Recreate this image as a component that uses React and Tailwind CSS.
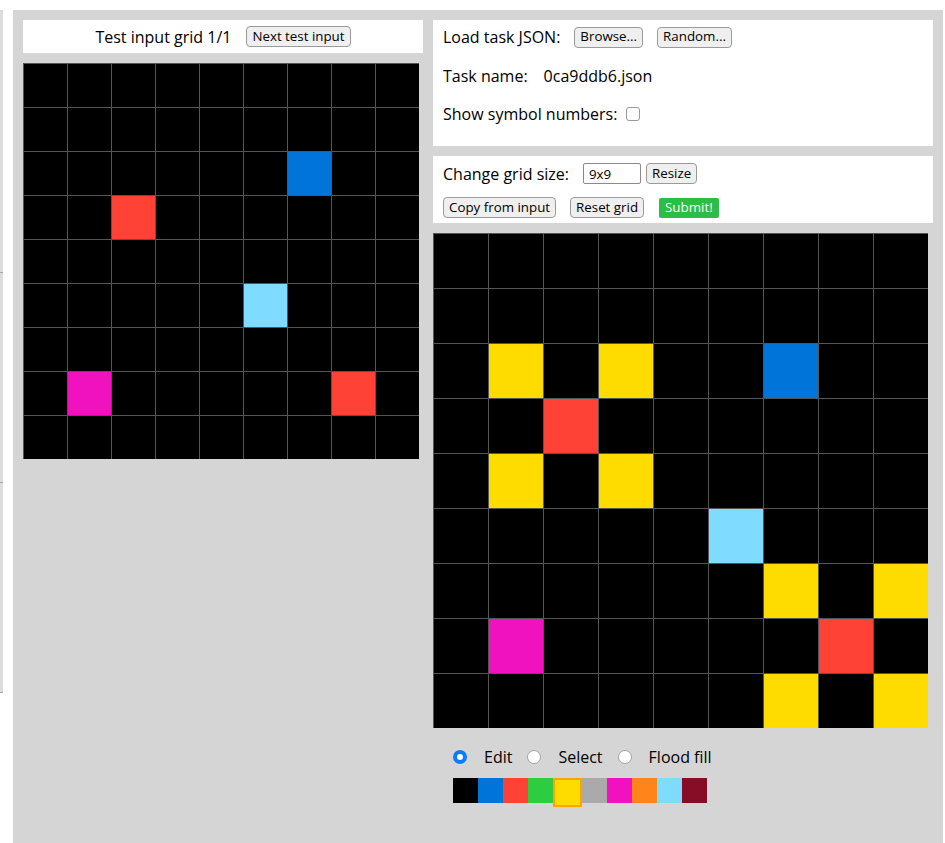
import { useState } from 'react'

// ARC palette, 0..9
const swatchClass = [
  'bg-black',
  'bg-[#0074d9]',
  'bg-[#ff4136]',
  'bg-[#2ecc40]',
  'bg-[#ffdc00]',
  'bg-[#aaaaaa]',
  'bg-[#f012be]',
  'bg-[#ff851b]',
  'bg-[#7fdbff]',
  'bg-[#870c25]',
]

const inputGrid = [
  [0, 0, 0, 0, 0, 0, 0, 0, 0],
  [0, 0, 0, 0, 0, 0, 0, 0, 0],
  [0, 0, 0, 0, 0, 0, 1, 0, 0],
  [0, 0, 2, 0, 0, 0, 0, 0, 0],
  [0, 0, 0, 0, 0, 0, 0, 0, 0],
  [0, 0, 0, 0, 0, 8, 0, 0, 0],
  [0, 0, 0, 0, 0, 0, 0, 0, 0],
  [0, 6, 0, 0, 0, 0, 0, 2, 0],
  [0, 0, 0, 0, 0, 0, 0, 0, 0],
]

const outputGrid = [
  [0, 0, 0, 0, 0, 0, 0, 0, 0],
  [0, 0, 0, 0, 0, 0, 0, 0, 0],
  [0, 4, 0, 4, 0, 0, 1, 0, 0],
  [0, 0, 2, 0, 0, 0, 0, 0, 0],
  [0, 4, 0, 4, 0, 0, 0, 0, 0],
  [0, 0, 0, 0, 0, 8, 0, 0, 0],
  [0, 0, 0, 0, 0, 0, 4, 0, 4],
  [0, 6, 0, 0, 0, 0, 0, 2, 0],
  [0, 0, 0, 0, 0, 0, 4, 0, 4],
]

function Btn({ children, className = '' }) {
  return (
    <button
      className={`h-[21px] rounded-[4px] border border-[#9a9a9a] bg-[#efefef] px-[5px] text-[13.33px] leading-none text-black ${className}`}
    >
      {children}
    </button>
  )
}

function Grid({ cells, big }) {
  return (
    <div className="grid w-fit grid-cols-9">
      {cells.flat().map((c, i) => (
        <div
          key={i}
          className={`border-t border-l border-[#555] ${
            big ? 'h-[55px] w-[55px]' : 'h-[44px] w-[44px]'
          } ${swatchClass[c]}`}
        />
      ))}
    </div>
  )
}

function ModeRadio({ label, checked, onChange }) {
  return (
    <label className="flex items-center">
      <input
        type="radio"
        name="mode"
        checked={checked}
        onChange={onChange}
        className="h-[14px] w-[14px] appearance-none rounded-full border border-[#a3a3a3] bg-white checked:border-[4px] checked:border-[#0a7cff]"
      />
      <span className="ml-[17px]">{label}</span>
    </label>
  )
}

export default function App() {
  const [mode, setMode] = useState('edit')
  const [selected, setSelected] = useState(4)

  return (
    <div
      className="flex bg-white text-[16px] text-black"
      style={{ fontFamily: '"Open Sans", "Noto Sans", sans-serif' }}
    >
      {/* edge of the hidden panel on the left */}
      <div className="mt-[10px] flex h-[683px] w-[3px] flex-col bg-[#dcdcdc]">
        <div className="h-[263px] border-b border-[#a8a8a8]" />
        <div className="h-[210px] border-b border-[#a8a8a8]" />
        <div className="h-[210px] border-b border-[#a8a8a8]" />
      </div>

      <div className="mt-[10px] ml-[10px] flex min-h-[840px] w-[930px] gap-[10px] bg-[#d5d5d5] p-[10px]">
        {/* test input column */}
        <div className="flex w-[400px] flex-col gap-[10px]">
          <div className="flex h-[33px] items-center justify-center bg-white">
            <span>Test input grid 1/1</span>
            <Btn className="ml-[15px]">Next test input</Btn>
          </div>
          <Grid cells={inputGrid} />
        </div>

        {/* output editor column */}
        <div className="flex w-[500px] flex-col">
          <div className="flex flex-col bg-white px-[10px] pt-[6px] pb-[21px]">
            <div className="flex h-[22px] items-center">
              <span>Load task JSON:</span>
              <Btn className="ml-[14px]">Browse...</Btn>
              <Btn className="ml-[14px]">Random...</Btn>
            </div>
            <div className="mt-[17px] flex h-[22px] items-center">
              <span>Task name:</span>
              <span className="ml-[16px]">0ca9ddb6.json</span>
            </div>
            <div className="mt-[16px] flex h-[22px] items-center">
              <span>Show symbol numbers:</span>
              <input
                type="checkbox"
                className="ml-[9px] h-[14px] w-[14px] appearance-none rounded-[3px] border border-[#9a9a9a] bg-white"
              />
            </div>
          </div>

          <div className="mt-[10px] flex flex-col bg-white px-[10px] pt-[7px] pb-[5px]">
            <div className="flex h-[21px] items-center">
              <span>Change grid size:</span>
              <input
                type="text"
                defaultValue="9x9"
                className="ml-[14px] h-[21px] w-[58px] rounded-[2px] border border-[#8a8a8a] px-[5px] text-[13.33px] outline-none"
              />
              <Btn className="ml-[5px]">Resize</Btn>
            </div>
            <div className="mt-[13px] flex h-[21px] items-center">
              <Btn>Copy from input</Btn>
              <Btn className="ml-[14px]">Reset grid</Btn>
              <button className="ml-[15px] h-[20px] rounded-[2px] bg-[#2bbd45] px-[6px] text-[13.33px] leading-none text-white">
                Submit!
              </button>
            </div>
          </div>

          <div className="mt-[10px]">
            <Grid cells={outputGrid} big />
          </div>

          <div className="mt-[19px] ml-[20px] flex h-[20px] items-center gap-[15px]">
            <ModeRadio label="Edit" checked={mode === 'edit'} onChange={() => setMode('edit')} />
            <ModeRadio label="Select" checked={mode === 'select'} onChange={() => setMode('select')} />
            <ModeRadio label="Flood fill" checked={mode === 'fill'} onChange={() => setMode('fill')} />
          </div>

          <div className="mt-[11px] ml-[20px] flex items-start">
            {swatchClass.map((cls, i) => (
              <div
                key={i}
                onClick={() => setSelected(i)}
                className={`${cls} ${
                  selected === i
                    ? 'h-[29px] w-[29px] border-2 border-[#ffa500]'
                    : 'h-[25px] w-[25px]'
                }`}
              />
            ))}
          </div>
        </div>
      </div>
    </div>
  )
}
